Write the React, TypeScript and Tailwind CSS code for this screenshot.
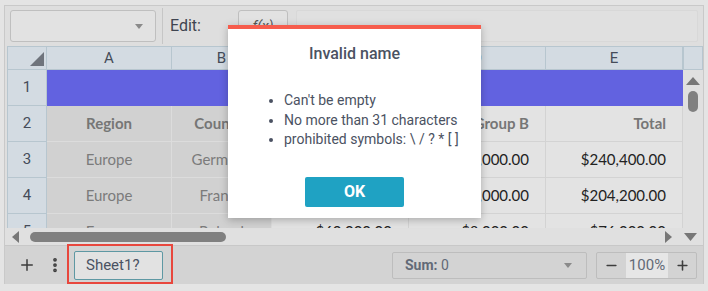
import React from 'react';
import { Plus, Minus, EllipsisVertical } from 'lucide-react';

const cols = [
  { key: 'A', w: 'w-[125px]' },
  { key: 'B', w: 'w-[100px]' },
  { key: 'C', w: 'w-[137px]' },
  { key: 'D', w: 'w-[137px]' },
  { key: 'E', w: 'w-[137px]' },
];

type Row = { n: number; cells: string[] };

const rows: Row[] = [
  { n: 2, cells: ['Region', 'Country', 'Group A', 'Group B', 'Total'] },
  { n: 3, cells: ['Europe', 'Germany', '$220,400.00', '$20,000.00', '$240,400.00'] },
  { n: 4, cells: ['Europe', 'France', '$184,200.00', '$20,000.00', '$204,200.00'] },
  { n: 5, cells: ['Europe', 'Poland', '$60,000.00', '$8,000.00', '$76,000.00'] },
];

const Caret = () => (
  <svg width="8" height="5" viewBox="0 0 8 5" className="fill-[#8a8a8a]">
    <path d="M0 0h8L4 5z" />
  </svg>
);

const DataCell = ({ i, text, header }: { i: number; text: string; header: boolean }) => {
  const grey = i < 2;
  const align = i === 0 || i === 1 ? 'justify-center' : 'justify-end pr-[16px]';
  const bg = grey ? 'bg-[#d1d1d1] border-[#dcdcdc]' : 'bg-[#e3e3e3] border-[#d3d3d3]';
  const color = header ? 'font-bold text-[#767676]' : grey ? 'text-[#7b7b7b]' : 'text-[#222]';
  return (
    <div className={`${cols[i].w} h-[36px] shrink-0 flex items-center border-r border-b ${bg} ${align} ${color}`}>
      {text}
    </div>
  );
};

export default function App() {
  return (
    <div className="w-[708px] h-[291px] relative bg-[#e4e4e4] font-[Roboto,sans-serif] pt-[5px] px-[4px] pb-[7px] overflow-hidden">
      <div className="h-full flex flex-col border-t border-x border-[#c9c9c9] bg-[#dedede]">
        {/* toolbar */}
        <div className="h-[40px] flex items-center pl-[5px] pr-[5px] shrink-0">
          <div className="w-[146px] h-[32px] rounded-[3px] border border-[#bfbfbf] bg-[#e2e2e2] flex items-center justify-end pr-[12px]">
            <Caret />
          </div>
          <div className="w-px h-[36px] bg-[#c6c6c6] mx-[6px]" />
          <span className="text-[16px] text-[#3f4450] ml-[1px]">Edit:</span>
          <div className="ml-[37px] w-[50px] h-[32px] rounded-[3px] border border-[#bfbfbf] bg-[#e2e2e2] flex items-center justify-center text-[14px] italic text-[#555]">
            f(x)
          </div>
          <div className="ml-[8px] flex-1 h-[32px] rounded-[2px] border border-[#d8d8d8] bg-[#e0e0e0]" />
        </div>

        {/* grid */}
        <div className="flex h-[182px] shrink-0 overflow-hidden pl-[2px]">
          <div className="flex flex-col">
            {/* column headers */}
            <div className="flex h-[24px] shrink-0 text-[15px] text-[#454c59]">
              <div className="w-[40px] h-full bg-[#d3dbe2] border-r border-b border-t border-l border-[#b7c6cf] relative">
                <svg width="14" height="14" viewBox="0 0 14 14" className="absolute right-[2px] bottom-[3px] fill-[#6f747c]">
                  <path d="M14 0v14H0z" />
                </svg>
              </div>
              {cols.map((c) => (
                <div key={c.key} className={`${c.w} h-full shrink-0 bg-[#d3dbe2] border-r border-b border-t border-[#b7c6cf] flex items-center justify-center`}>
                  {c.key}
                </div>
              ))}
            </div>
            {/* row 1 */}
            <div className="flex h-[36px] shrink-0">
              <div className="w-[40px] h-full bg-[#d3dbe2] border-r border-b border-l border-[#b7c6cf] flex items-center justify-center text-[15px] text-[#454c59]">1</div>
              <div className="w-[636px] h-full bg-[#6262e0]" />
            </div>
            {rows.map((r) => (
              <div key={r.n} className="flex h-[36px] shrink-0 font-[Lato,sans-serif] text-[15px]">
                <div className="w-[40px] h-full shrink-0 bg-[#d3dbe2] border-r border-b border-l border-[#b7c6cf] flex items-center justify-center font-[Roboto,sans-serif] text-[#454c59]">
                  {r.n}
                </div>
                {r.cells.map((t, i) => (
                  <DataCell key={i} i={i} text={t} header={r.n === 2} />
                ))}
              </div>
            ))}
          </div>
          {/* vertical scrollbar */}
          <div className="w-[21px] flex flex-col items-center bg-[#e0e0e0]">
            <div className="w-full h-[24px] bg-[#d3dbe2] border border-[#b7c6cf] shrink-0" />
            <svg width="14" height="8" viewBox="0 0 14 8" className="mt-[7px] fill-[#777]">
              <path d="M0 8L7 0l7 8z" />
            </svg>
            <div className="mt-[6px] w-[10px] h-[21px] rounded-full bg-[#808080]" />
          </div>
        </div>

        {/* horizontal scrollbar */}
        <div className="h-[17px] shrink-0 flex items-center bg-[#e0e0e0] pl-[7px] pr-[6px]">
          <svg width="7" height="12" viewBox="0 0 7 12" className="fill-[#777]">
            <path d="M7 0v12L0 6z" />
          </svg>
          <div className="ml-[11px] w-[196px] h-[10px] rounded-full bg-[#808080]" />
          <div className="flex-1" />
          <svg width="7" height="12" viewBox="0 0 7 12" className="fill-[#777]">
            <path d="M0 0v12l7-6z" />
          </svg>
          <svg width="13" height="8" viewBox="0 0 13 8" className="ml-[12px] fill-[#777]">
            <path d="M0 0h13L6.5 8z" />
          </svg>
        </div>

        {/* bottom bar */}
        <div className="flex-1 flex items-center bg-[#d3d3d3] pl-[13px] pr-[6px] border-t border-[#c8c8c8]">
          <Plus size={18} strokeWidth={2} className="text-[#3d3d3d]" />
          <EllipsisVertical size={18} strokeWidth={3} className="ml-[10px] text-[#3d3d3d]" />
          <div className="ml-[10px] w-[89px] h-[29px] border border-[#5e98a3] rounded-[2px] bg-[#e2e2e2] flex items-center pl-[11px] text-[15px] text-[#4a5262]">
            Sheet1?
          </div>
          <div className="flex-1" />
          <div className="w-[195px] h-[27px] border border-[#bdbdbd] rounded-[2px] flex items-center justify-between pl-[12px] pr-[14px] text-[14px] text-[#626a77]">
            <span>
              <span className="font-bold">Sum:</span> 0
            </span>
            <Caret />
          </div>
          <div className="ml-[9px] w-[101px] h-[27px] border border-[#bdbdbd] rounded-[2px] flex items-center text-[15px] text-[#626a77]">
            <div className="w-[29px] flex justify-center">
              <Minus size={15} strokeWidth={2.5} className="text-[#3d3d3d]" />
            </div>
            <div className="w-[42px] h-full bg-[#e6e6e6] flex items-center justify-center">100%</div>
            <div className="flex-1 flex justify-center">
              <Plus size={15} strokeWidth={2.5} className="text-[#3d3d3d]" />
            </div>
          </div>
        </div>
      </div>

      {/* highlight around sheet tab */}
      <div className="absolute left-[67px] top-[244px] w-[106px] h-[40px] border-2 border-[#e8473d]" />

      {/* modal */}
      <div className="absolute left-[228px] top-[25px] w-[253px] h-[193px] bg-white border-t-[4px] border-[#f65c4c] shadow-[0_2px_8px_rgba(0,0,0,0.25)] flex flex-col items-center">
        <div className="mt-[13px] text-[16px] font-medium text-[#4b5262]">Invalid name</div>
        <ul className="mt-[25px] self-start pl-[42px] text-[14px] leading-[19.5px] text-[#4b5262] list-disc list-outside ml-[14px]">
          <li>Can't be empty</li>
          <li>No more than 31 characters</li>
          <li>prohibited symbols: \ / ? * [ ]</li>
        </ul>
        <button className="mt-[27px] w-[99px] h-[30px] rounded-[2px] bg-[#1fa2c3] text-white font-bold text-[16px]">OK</button>
      </div>
    </div>
  );
}
